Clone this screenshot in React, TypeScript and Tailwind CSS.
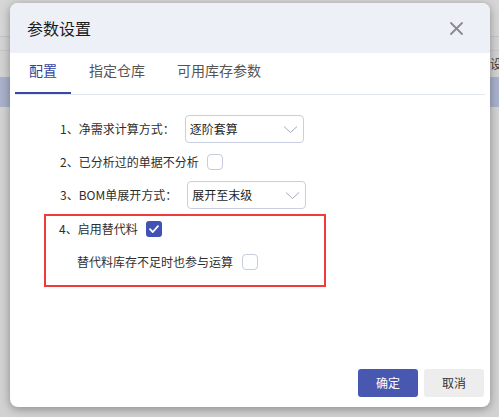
const font = { fontFamily: '"Noto Sans CJK SC", "Noto Sans", sans-serif' };

function Select({ value }: { value: string }) {
  return (
    <div className="flex h-[28px] w-[119px] items-center justify-between rounded-[4px] border border-[#c9cee0] bg-white pl-[4px] pr-[5px] text-[12px] text-[#1f1f1f]">
      <span>{value}</span>
      <svg width="15" height="9" viewBox="0 0 15 9">
        <path d="M1 1.5 L7.5 7.5 L14 1.5" fill="none" stroke="#a3aac0" strokeWidth="1" />
      </svg>
    </div>
  );
}

function Checkbox({ checked = false }: { checked?: boolean }) {
  if (checked) {
    return (
      <span className="flex h-[16px] w-[16px] items-center justify-center rounded-[3px] bg-[#4152b6]">
        <svg width="12" height="12" viewBox="0 0 12 12">
          <path d="M2 6.2 L4.8 9 L10 3.2" fill="none" stroke="white" strokeWidth="1.8" strokeLinecap="round" strokeLinejoin="round" />
        </svg>
      </span>
    );
  }
  return <span className="h-[16px] w-[16px] rounded-[4px] border border-[#c6cbdd] bg-white" />;
}

export default function App() {
  const tabs = ["配置", "指定仓库", "可用库存参数"];
  return (
    <div className="relative h-[417px] w-[499px] overflow-hidden bg-[#d2d2d2]" style={font}>
      {/* dimmed page behind the dialog */}
      <div className="flex flex-col">
        <div className="h-[36px] bg-[#d6d6d6]" />
        <div className="h-px bg-[#c2c5d1]" />
        <div className="h-[13px] bg-[#d3d3d3]" />
        <div className="h-px bg-[#c7c7c7]" />
        <div className="flex h-[26px] items-center justify-end overflow-hidden whitespace-nowrap text-[12px] text-[#3a3a3a]">
          <span className="-mr-[3px]">次设</span>
        </div>
        <div className="h-[30px] bg-[#a9b1cb]" />
      </div>

      {/* dialog */}
      <div className="absolute left-[10px] top-[3px] flex h-[404px] w-[480px] flex-col overflow-hidden rounded-[8px] bg-white shadow-[0_2px_10px_rgba(0,0,0,0.35)]">
        <div className="flex h-[50px] items-center justify-between bg-[#edf0f7] pl-[17px] pr-[27px]">
          <span className="text-[16px] text-[#1a1a1a]">参数设置</span>
          <svg width="13" height="13" viewBox="0 0 13 13">
            <path d="M1 1 L12 12 M12 1 L1 12" stroke="#8a8a8a" strokeWidth="1.8" strokeLinecap="round" />
          </svg>
        </div>

        <div className="mx-[5px] flex gap-[4px] border-b border-[#e3e7ef]">
          {tabs.map((t, i) => (
            <div
              key={t}
              className={
                i === 0
                  ? "flex h-[41px] items-center border-b-2 border-[#3a49a0] px-[14px] pb-[5px] text-[14px] text-[#34449c]"
                  : "flex h-[41px] items-center border-b-2 border-transparent px-[14px] pb-[5px] text-[14px] text-[#555]"
              }
            >
              {t}
            </div>
          ))}
        </div>

        <div className="flex flex-1 flex-col pt-[20px] text-[12px] text-[#2e2e2e]">
          <div className="flex flex-col gap-[5px] pl-[50px]">
            <div className="flex h-[28px] items-center gap-[10px]">
              <span>1、净需求计算方式：</span>
              <Select value="逐阶套算" />
            </div>
            <div className="flex h-[28px] items-center gap-[8px]">
              <span>2、已分析过的单据不分析</span>
              <Checkbox />
            </div>
            <div className="flex h-[28px] items-center gap-[10px]">
              <span>3、BOM单展开方式：</span>
              <Select value="展开至末级" />
            </div>
          </div>

          <div className="ml-[34px] mt-[5px] flex w-[282px] flex-col gap-[7px] border-2 border-[#f23a3a] pb-[10px] pl-[13px]">
            <div className="flex h-[26px] items-center gap-[8px]">
              <span>4、启用替代料</span>
              <Checkbox checked />
            </div>
            <div className="flex h-[26px] items-center gap-[9px] pl-[18px]">
              <span>替代料库存不足时也参与运算</span>
              <Checkbox />
            </div>
          </div>
        </div>

        <div className="flex justify-end gap-[6px] pb-[10px] pr-[6px]">
          <button className="h-[28px] w-[60px] rounded-[3px] bg-[#4858b0] text-[12px] text-white">确定</button>
          <button className="h-[28px] w-[60px] rounded-[3px] bg-[#ededed] text-[12px] text-[#333]">取消</button>
        </div>
      </div>
    </div>
  );
}
